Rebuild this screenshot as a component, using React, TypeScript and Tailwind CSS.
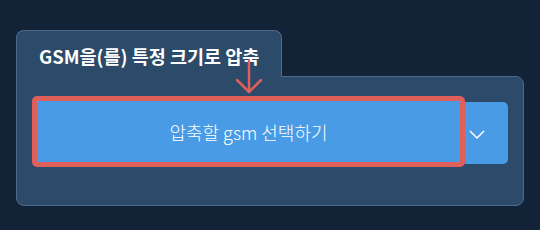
const KR = { fontFamily: '"Noto Sans CJK KR", "Noto Sans", sans-serif' };

export default function App() {
  return (
    <div className="w-[540px] h-[230px] bg-[#122237] pt-[30px] px-4" style={KR}>
      <div className="relative w-[508px]">
        <div className="relative z-10 -mb-px w-[266px] h-[47px] flex items-center pl-[22px] bg-[#2c4a69] border border-b-0 border-[#4d6a8a] rounded-t-lg">
          <h1 className="text-[18.5px] font-bold text-white leading-none pt-[5px]">
            GSM을(를) 특정 크기로 압축
          </h1>
        </div>
        <div className="h-[130px] bg-[#2c4a69] border border-[#4d6a8a] rounded-b-lg rounded-tr-lg pt-[19px] pl-[15px] pr-[14px]">
          <div className="flex items-start">
            <button className="w-[433px] h-[71px] bg-[#4a9be6] border-[5px] border-[#df605b] rounded-[5px] text-white text-[18px] font-light flex items-center justify-center pt-px">
              압축할 gsm 선택하기
            </button>
            <button className="mt-[6px] w-[43px] h-[62px] bg-[#4a9be6] rounded-r-[5px] flex items-center pl-[4px] pt-[2px] text-white">
              <svg width="16" height="9" viewBox="0 0 16 9" fill="none" stroke="white" strokeWidth="1.5">
                <path d="M1 1 L8 8 L15 1" />
              </svg>
            </button>
          </div>
        </div>
        <svg
          className="absolute left-[218px] top-[29px] z-20"
          width="30"
          height="36"
          viewBox="0 0 30 36"
          fill="none"
          stroke="#df605b"
          strokeWidth="2.5"
          strokeLinecap="round"
          strokeLinejoin="round"
        >
          <path d="M15 2 V33" />
          <path d="M3 21 L15 33 L27 21" />
        </svg>
      </div>
    </div>
  );
}
